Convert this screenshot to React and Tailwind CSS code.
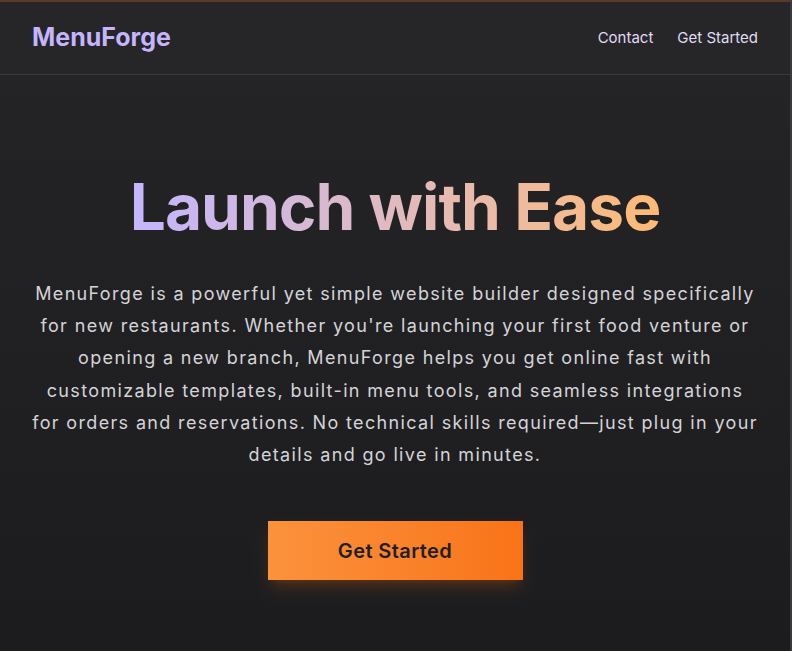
const App = () => {
  return (
    <div
      className="min-h-[651px] bg-[#1c1c1e] border-t-2 border-t-[#5b3b26] border-r-2 border-r-[#3a3a3c] flex flex-col"
      style={{ fontFamily: 'Inter, "Noto Sans", sans-serif' }}
    >
      {/* Header */}
      <header className="h-[73px] px-8 flex items-center justify-between bg-[#262628] border-b border-[#3a3a3c]">
        <span className="text-[25px] font-bold text-[#c4b5fd]">MenuForge</span>
        <nav className="flex items-center gap-6 text-[15px] text-[#e0dcf5]">
          <a href="#">Contact</a>
          <a href="#">Get Started</a>
        </nav>
      </header>

      {/* Hero */}
      <main className="flex-1 flex flex-col items-center px-4 pt-[100px] bg-gradient-to-b from-[#242426] to-[#1c1c1e]">
        <h1 className="text-[64px] font-bold leading-none tracking-[-0.015em] bg-gradient-to-r from-[#c4b5fd] to-[#fdba74] bg-clip-text text-transparent">
          Launch with Ease
        </h1>
        <p className="mt-[39px] whitespace-nowrap text-center text-[18px] leading-[32.2px] text-[#d4d4d8] tracking-[0.075em]">
          MenuForge is a powerful yet simple website builder designed specifically<br />
          for new restaurants. Whether you're launching your first food venture or<br />
          opening a new branch, MenuForge helps you get online fast with<br />
          customizable templates, built-in menu tools, and seamless integrations<br />
          for orders and reservations. No technical skills required—just plug in your<br />
          details and go live in minutes.
        </p>
        <button className="mt-[50px] w-[255px] h-[59px] bg-gradient-to-r from-[#fb923c] to-[#f97316] text-[#1f1f1f] text-[20px] font-semibold tracking-[0.02em] shadow-lg shadow-orange-500/20">
          Get Started
        </button>
      </main>
    </div>
  );
};

export default App;
